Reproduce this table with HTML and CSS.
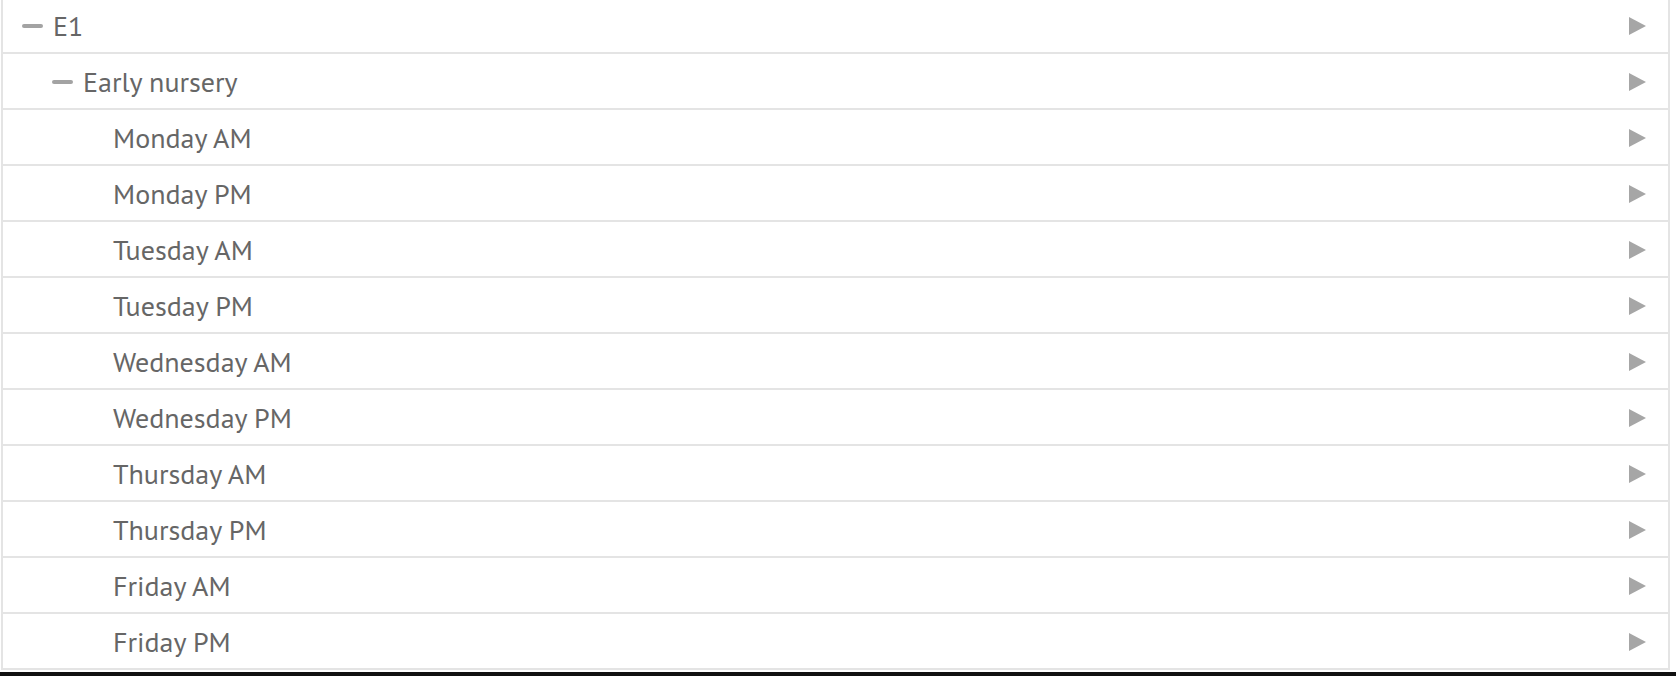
FILE: index.html
```html
<!DOCTYPE html>
<html>
<head>
<meta charset="utf-8">
<link rel="stylesheet" href="styles.css">
</head>
<body>
<div class="page">
  <ul class="tree">
    <li class="row level-0"><span class="toggle"></span><span class="label">E1</span><span class="arrow"></span></li>
    <li class="row level-1"><span class="toggle"></span><span class="label">Early nursery</span><span class="arrow"></span></li>
    <li class="row level-2"><span class="label">Monday AM</span><span class="arrow"></span></li>
    <li class="row level-2"><span class="label">Monday PM</span><span class="arrow"></span></li>
    <li class="row level-2"><span class="label">Tuesday AM</span><span class="arrow"></span></li>
    <li class="row level-2"><span class="label">Tuesday PM</span><span class="arrow"></span></li>
    <li class="row level-2"><span class="label">Wednesday AM</span><span class="arrow"></span></li>
    <li class="row level-2"><span class="label">Wednesday PM</span><span class="arrow"></span></li>
    <li class="row level-2"><span class="label">Thursday AM</span><span class="arrow"></span></li>
    <li class="row level-2"><span class="label">Thursday PM</span><span class="arrow"></span></li>
    <li class="row level-2"><span class="label">Friday AM</span><span class="arrow"></span></li>
    <li class="row level-2"><span class="label">Friday PM</span><span class="arrow"></span></li>
  </ul>
  <div class="footer-bar"></div>
</div>
</body>
</html>
```
FILE: styles.css
```css
* { box-sizing: border-box; }
html, body { margin: 0; padding: 0; background: #fff; overflow: hidden; }
.page {
  width: 1676px;
  height: 676px;
  overflow: hidden;
}
.tree {
  list-style: none;
  margin: -2px 0 0 1px;
  padding: 0;
  width: 1669px;
  border-left: 2px solid #e4e4e4;
  border-right: 2px solid #e4e4e4;
}
.row {
  height: 56px;
  border-bottom: 2px solid #e4e4e4;
  display: flex;
  align-items: center;
  padding-top: 1px;
  font-family: "PT Sans", Lato, "Open Sans", sans-serif;
  font-size: 28px;
  color: #666;
}
.level-0 { padding-left: 19px; }
.level-1 { padding-left: 49px; }
.level-2 { padding-left: 110px; }
.toggle {
  width: 21px;
  height: 4px;
  border-radius: 2px;
  background: #a3a3a3;
  margin-right: 10px;
  flex: none;
}
.label { flex: 1 1 auto; }
.arrow {
  width: 0;
  height: 0;
  border-top: 9px solid transparent;
  border-bottom: 9px solid transparent;
  border-left: 17px solid #a6a6a6;
  margin-right: 22px;
  flex: none;
}
.footer-bar {
  height: 4px;
  margin-top: 2px;
  background: #111;
}
```
